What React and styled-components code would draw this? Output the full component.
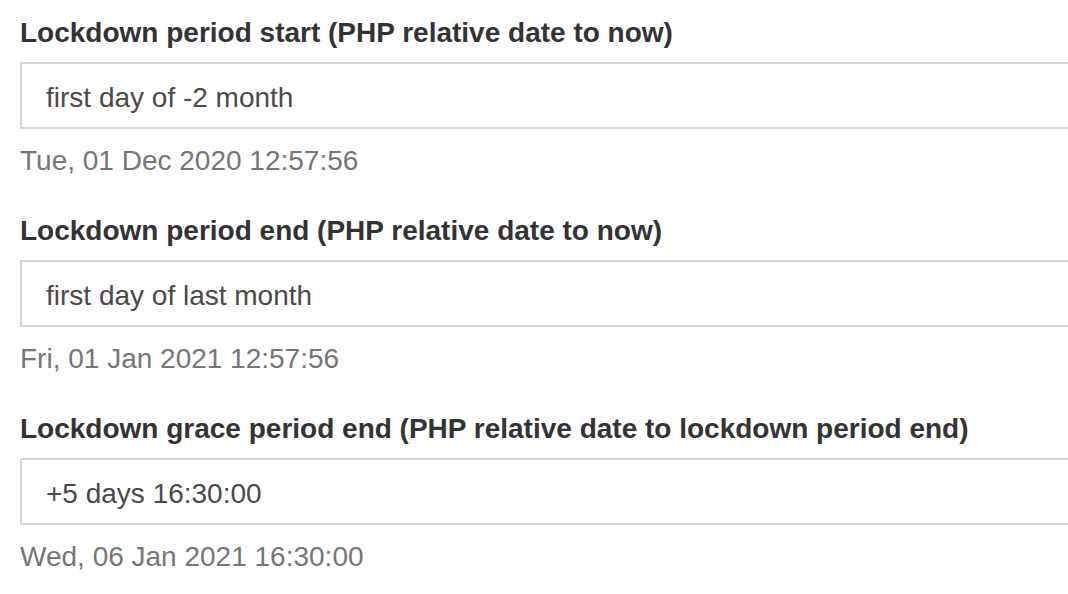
import React from "react";
import styled, { createGlobalStyle } from "styled-components";

const Global = createGlobalStyle`
  html, body { margin: 0; padding: 0; background: #fff; }
  body { font-family: "Liberation Sans", Arial, Helvetica, sans-serif; }
`;

const Form = styled.div`
  box-sizing: border-box;
  width: 100%;
  padding: 17px 0 0 20px;
  display: flex;
  flex-direction: column;
  gap: 38px;
`;

const Field = styled.div`
  display: flex;
  flex-direction: column;
`;

const Label = styled.label`
  font-size: 28px;
  line-height: 32px;
  font-weight: bold;
  color: #333;
  margin-bottom: 13px;
`;

const Input = styled.input`
  box-sizing: border-box;
  width: 100%;
  height: 67px;
  border: 2px solid #d3d6df;
  border-right: none;
  border-radius: 0;
  padding: 4px 24px 0;
  font-family: "Liberation Sans", Arial, sans-serif;
  font-size: 28px;
  line-height: 32px;
  color: #4a4a4a;
  background: #fff;
  outline: none;
`;

const Hint = styled.div`
  margin-top: 16px;
  font-size: 28px;
  line-height: 32px;
  color: #767676;
`;

const fields = [
  {
    label: "Lockdown period start (PHP relative date to now)",
    value: "first day of -2 month",
    hint: "Tue, 01 Dec 2020 12:57:56",
  },
  {
    label: "Lockdown period end (PHP relative date to now)",
    value: "first day of last month",
    hint: "Fri, 01 Jan 2021 12:57:56",
  },
  {
    label: "Lockdown grace period end (PHP relative date to lockdown period end)",
    value: "+5 days 16:30:00",
    hint: "Wed, 06 Jan 2021 16:30:00",
  },
];

export default function App() {
  return (
    <>
      <Global />
      <Form>
        {fields.map((f) => (
          <Field key={f.label}>
            <Label>{f.label}</Label>
            <Input type="text" defaultValue={f.value} />
            <Hint>{f.hint}</Hint>
          </Field>
        ))}
      </Form>
    </>
  );
}
